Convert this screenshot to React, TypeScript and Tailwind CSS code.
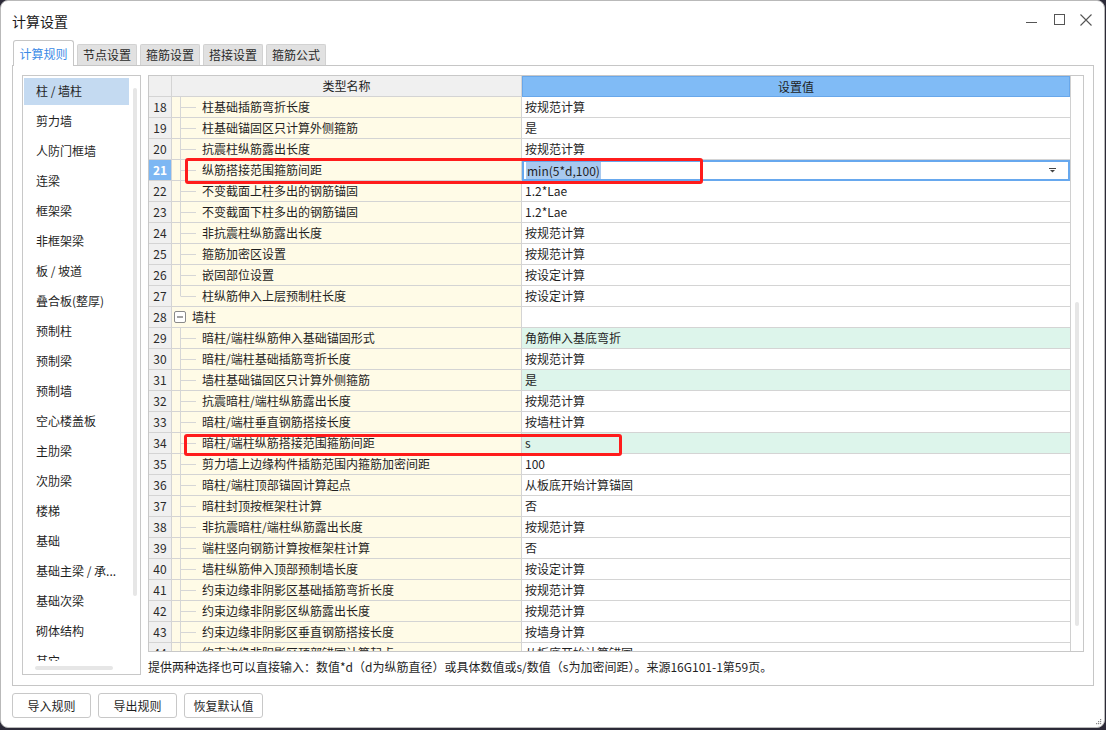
import React from "react";

type Row = { n: number; name: string; value: string; green?: boolean; kind?: "item" | "last" | "group" };

const rows: Row[] = [
  { n: 18, name: "柱基础插筋弯折长度", value: "按规范计算" },
  { n: 19, name: "柱基础锚固区只计算外侧箍筋", value: "是" },
  { n: 20, name: "抗震柱纵筋露出长度", value: "按规范计算" },
  { n: 21, name: "纵筋搭接范围箍筋间距", value: "min(5*d,100)" },
  { n: 22, name: "不变截面上柱多出的钢筋锚固", value: "1.2*Lae" },
  { n: 23, name: "不变截面下柱多出的钢筋锚固", value: "1.2*Lae" },
  { n: 24, name: "非抗震柱纵筋露出长度", value: "按规范计算" },
  { n: 25, name: "箍筋加密区设置", value: "按规范计算" },
  { n: 26, name: "嵌固部位设置", value: "按设定计算" },
  { n: 27, name: "柱纵筋伸入上层预制柱长度", value: "按设定计算", kind: "last" },
  { n: 28, name: "墙柱", value: "", kind: "group" },
  { n: 29, name: "暗柱/端柱纵筋伸入基础锚固形式", value: "角筋伸入基底弯折", green: true },
  { n: 30, name: "暗柱/端柱基础插筋弯折长度", value: "按规范计算" },
  { n: 31, name: "墙柱基础锚固区只计算外侧箍筋", value: "是", green: true },
  { n: 32, name: "抗震暗柱/端柱纵筋露出长度", value: "按规范计算" },
  { n: 33, name: "暗柱/端柱垂直钢筋搭接长度", value: "按墙柱计算" },
  { n: 34, name: "暗柱/端柱纵筋搭接范围箍筋间距", value: "s", green: true },
  { n: 35, name: "剪力墙上边缘构件插筋范围内箍筋加密间距", value: "100" },
  { n: 36, name: "暗柱/端柱顶部锚固计算起点", value: "从板底开始计算锚固" },
  { n: 37, name: "暗柱封顶按框架柱计算", value: "否" },
  { n: 38, name: "非抗震暗柱/端柱纵筋露出长度", value: "按规范计算" },
  { n: 39, name: "端柱竖向钢筋计算按框架柱计算", value: "否" },
  { n: 40, name: "墙柱纵筋伸入顶部预制墙长度", value: "按设定计算" },
  { n: 41, name: "约束边缘非阴影区基础插筋弯折长度", value: "按规范计算" },
  { n: 42, name: "约束边缘非阴影区纵筋露出长度", value: "按规范计算" },
  { n: 43, name: "约束边缘非阴影区垂直钢筋搭接长度", value: "按墙身计算" },
  { n: 44, name: "约束边缘非阴影区顶部锚固计算起点", value: "从板底开始计算锚固" },
];

const listItems = [
  "柱 / 墙柱",
  "剪力墙",
  "人防门框墙",
  "连梁",
  "框架梁",
  "非框架梁",
  "板 / 坡道",
  "叠合板(整厚)",
  "预制柱",
  "预制梁",
  "预制墙",
  "空心楼盖板",
  "主肋梁",
  "次肋梁",
  "楼梯",
  "基础",
  "基础主梁 / 承...",
  "基础次梁",
  "砌体结构",
  "其它",
];

const tabs = ["计算规则", "节点设置", "箍筋设置", "搭接设置", "箍筋公式"];

function TreeMark({ kind }: { kind?: Row["kind"] }) {
  if (kind === "group") {
    return (
      <svg width="20" height="20" className="shrink-0">
        <rect x="2.5" y="4.5" width="11" height="11" rx="1.5" fill="white" stroke="#8a8a8a" />
        <line x1="5" y1="10" x2="11" y2="10" stroke="#444" />
      </svg>
    );
  }
  return (
    <svg width="30" height="20" className="shrink-0">
      <line x1="8.5" y1="-1" x2="8.5" y2={kind === "last" ? 10 : 21} stroke="#d6d6d6" />
      <line x1="8.5" y1="10.5" x2="24" y2="10.5" stroke="#d6d6d6" />
    </svg>
  );
}

export default function App() {
  return (
    <div className="w-[1106px] h-[730px] bg-[#2c2a38] overflow-hidden font-['Noto_Sans_CJK_SC',sans-serif] text-[12px] text-[#1f1f1f]">
      <div className="relative w-[1105px] h-[728px] bg-white border border-[#b9b9b9] rounded-[8px] flex flex-col">
        {/* Title bar */}
        <div className="h-[39px] flex items-center pl-[11px] shrink-0">
          <span className="text-[14px] leading-[20px] text-[#1a1a1a]">计算设置</span>
          <div className="ml-auto flex items-start h-[39px] pt-[13px] pr-[12px]">
            <svg width="11" height="11" className="mr-[17px]">
              <line x1="0" y1="8.5" x2="11" y2="8.5" stroke="#555" />
            </svg>
            <svg width="11" height="11" className="mr-[15px]">
              <rect x="0.5" y="0.5" width="10" height="10" fill="none" stroke="#555" />
            </svg>
            <svg width="12" height="12">
              <path d="M0.5 0.5 L11.5 11.5 M11.5 0.5 L0.5 11.5" stroke="#555" strokeWidth="1.1" />
            </svg>
          </div>
        </div>

        {/* Tabs */}
        <div className="h-[25px] pl-[12px] flex items-end gap-[3px] shrink-0">
          {tabs.map((t, i) =>
            i === 0 ? (
              <div
                key={t}
                className="relative z-10 -mb-[1px] w-[61px] h-[26px] bg-white border border-b-0 border-[#c6c6c6] rounded-t-[3px] flex items-center justify-center text-[#3b8ae6] text-[12px]"
              >
                {t}
              </div>
            ) : (
              <div
                key={t}
                className="w-[60px] h-[21px] bg-[#e1e1e1] border border-b-0 border-[#d2d2d2] rounded-t-[2px] flex items-center justify-center text-[#2a2a2a]"
              >
                {t}
              </div>
            )
          )}
        </div>

        {/* Pane */}
        <div className="ml-[11px] w-[1082px] h-[621px] border border-[#c6c6c6] p-[9px] flex gap-[7px] shrink-0">
          {/* Left list */}
          <div className="w-[119px] h-[600px] border border-[#c8c8c8] flex flex-col">
            <div className="flex-1 flex overflow-hidden">
              <div className="w-[106px] pl-[1px] flex flex-col">
                {listItems.map((it, i) => (
                  <div key={it} className="h-[30px] shrink-0 flex items-center">
                    <div
                      className={
                        "w-full h-[27px] flex items-center pl-[12px] whitespace-nowrap " +
                        (i === 0 ? "bg-[#c4daf1]" : "")
                      }
                    >
                      {it}
                    </div>
                  </div>
                ))}
              </div>
              <div className="flex-1 pl-[4px] pt-[12px]">
                <div className="w-[4px] h-[508px] rounded-full bg-[#e6e6e6]" />
              </div>
            </div>
            <div className="h-[13px] pl-[12px] pt-[5px] shrink-0">
              <div className="w-[78px] h-[4px] rounded-full bg-[#e6e6e6]" />
            </div>
          </div>

          {/* Right area */}
          <div className="w-[936px] flex flex-col">
            <div className="w-[936px] h-[577px] border border-[#c8c8c8] flex">
              <div className="relative w-[921px] flex flex-col overflow-hidden">
                {/* Header */}
                <div className="h-[21px] flex shrink-0">
                  <div className="w-[23px] bg-[#f0f0f0] border-r border-b border-[#d4d4d4]" />
                  <div className="w-[350px] bg-[#f0f0f0] border-r border-b border-[#d4d4d4] flex items-center justify-center">
                    类型名称
                  </div>
                  <div className="w-[548px] bg-[#80bbf6] border border-[#68a7ea] flex items-center justify-center">
                    设置值
                  </div>
                </div>
                {/* Body */}
                <div className="relative flex-1 overflow-hidden">
                  {rows.map((r) => {
                    const sel = r.n === 21;
                    return (
                      <div key={r.n} className="h-[21px] flex">
                        <div
                          className={
                            "w-[23px] shrink-0 border-r border-b border-[#d4d4d4] flex items-center justify-center text-[12px] " +
                            (sel ? "bg-[#7db7f3] text-white font-bold" : "bg-[#f0f0f0] text-[#2a2a2a]")
                          }
                        >
                          {r.n}
                        </div>
                        <div className="w-[350px] shrink-0 bg-[#fffbe7] border-r border-b border-[#d4d4d4] flex items-center whitespace-nowrap overflow-hidden">
                          <TreeMark kind={r.kind} />
                          <span className={r.kind === "group" ? "" : "pl-[0px]"}>{r.name}</span>
                        </div>
                        {sel ? (
                          <div className="w-[548px] shrink-0 border-2 border-[#67a8ee] bg-white flex items-center pl-[2px] pr-[12px]">
                            <span className="bg-[#a9c9ef] px-[1px] leading-[17px]">{r.value}</span>
                            <svg width="7" height="5" className="ml-auto">
                              <rect x="0" y="0" width="7" height="1" fill="#444" />
                              <path d="M1 2 L6 2 L3.5 4.5 Z" fill="#444" />
                            </svg>
                          </div>
                        ) : (
                          <div
                            className={
                              "w-[548px] shrink-0 border-b border-[#d4d4d4] flex items-center pl-[3px] whitespace-nowrap " +
                              (r.green ? "bg-[#ddf5eb]" : "bg-white")
                            }
                          >
                            {r.value}
                          </div>
                        )}
                      </div>
                    );
                  })}
                  {/* red annotation boxes */}
                  <div className="absolute left-[36px] top-[61px] w-[518px] h-[26px] border-[3px] border-[#ff1c1c] rounded-[3px]" />
                  <div className="absolute left-[35px] top-[337px] w-[438px] h-[22px] border-[3px] border-[#ff1c1c] rounded-[3px]" />
                </div>
              </div>
              {/* vertical scrollbar */}
              <div className="w-[13px] border-l border-[#d0d0d0] pl-[4px] pt-[226px]">
                <div className="w-[4px] h-[324px] rounded-full bg-[#e6e6e6]" />
              </div>
            </div>
            <div className="mt-[7px] leading-[16px] whitespace-nowrap text-[#1f1f1f]">
              提供两种选择也可以直接输入：数值*d（d为纵筋直径）或具体数值或s/数值（s为加密间距）。来源16G101-1第59页。
            </div>
          </div>
        </div>

        {/* Buttons */}
        <div className="mt-[7px] pl-[11px] flex gap-[7px]">
          {["导入规则", "导出规则", "恢复默认值"].map((b) => (
            <div
              key={b}
              className="w-[79px] h-[25px] border border-[#c8c8c8] rounded-[3px] bg-white flex items-center justify-center"
            >
              {b}
            </div>
          ))}
        </div>

        {/* resize grip */}
        <svg width="7" height="7" className="absolute right-[2px] bottom-[2px]">
          <rect x="5" y="1" width="1.2" height="1.2" fill="#888" />
          <rect x="3" y="3" width="1.2" height="1.2" fill="#888" />
          <rect x="5" y="3" width="1.2" height="1.2" fill="#888" />
          <rect x="1" y="5" width="1.2" height="1.2" fill="#888" />
          <rect x="3" y="5" width="1.2" height="1.2" fill="#888" />
          <rect x="5" y="5" width="1.2" height="1.2" fill="#888" />
        </svg>
      </div>
    </div>
  );
}
